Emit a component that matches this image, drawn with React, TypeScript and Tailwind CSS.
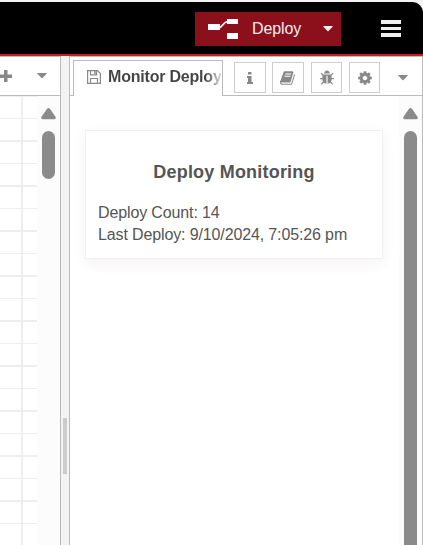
import type { ReactNode } from 'react';

const BOOK =
  'M1639 478q40 57 18 129l-275 906q-19 64-76.5 107.5t-122.5 43.5h-923q-77 0-148.5-53.5t-99.5-131.5q-24-67-2-127 0-4 3-27t4-37q1-8-3-21.5t-3-19.5q2-11 8-21t16.5-23.5 16.5-23.5q23-38 45-91.5t30-91.5q3-10 .5-30t-.5-28q3-11 17-28t17-23q21-36 42-92t25-90q1-9-2.5-32t.5-28q4-13 22-30.5t22-22.5q19-26 42.5-84.5t27.5-96.5q1-8-3-25.5t-2-26.5q2-8 9-18t18-23 17-21q8-12 16.5-30.5t15-35 16-36 19.5-32 26.5-23.5 36-11.5 47.5 5.5l-1 3q38-9 51-9h761q74 0 114 56t18 130l-274 906q-36 119-71.5 153.5t-128.5 34.5h-869q-27 0-38 15-11 16-1 43 24 70 144 70h923q29 0 56-15.5t35-41.5l300-987q7-22 5-57 38 15 59 43zm-1064 2q-4 13 2 22.5t20 9.5h608q13 0 25.5-9.5t16.5-22.5l21-64q4-13-2-22.5t-20-9.5h-608q-13 0-25.5 9.5t-16.5 22.5zm-83 256q-4 13 2 22.5t20 9.5h608q13 0 25.5-9.5t16.5-22.5l21-64q4-13-2-22.5t-20-9.5h-608q-13 0-25.5 9.5t-16.5 22.5z';
const BUG =
  'M1696 960q0 26-19 45t-45 19h-224q0 171-67 290l208 209q19 19 19 45t-19 45q-18 19-45 19t-45-19l-198-197q-5 5-15 13t-42 28.5-65 36.5-82 29-97 13v-896h-128v896q-51 0-101.5-13.5t-87-33-66-39-43.5-32.5l-15-14-183 207q-20 21-48 21-24 0-43-16-19-18-20.5-44.5t15.5-46.5l202-227q-58-114-58-274h-224q-26 0-45-19t-19-45 19-45 45-19h224v-294l-173-173q-19-19-19-45t19-45 45-19 45 19l173 173h844l173-173q19-19 45-19t45 19 19 45-19 45l-173 173v294h224q26 0 45 19t19 45zm-480-576h-640q0-133 93.5-226.5t226.5-93.5 226.5 93.5 93.5 226.5z';
const COG =
  'M1152 896q0-106-75-181t-181-75-181 75-75 181 75 181 181 75 181-75 75-181zm512-109v222q0 12-8 23t-20 13l-185 28q-19 54-39 91 35 50 107 138 10 12 10 25t-9 23q-27 37-99 108t-94 71q-12 0-26-9l-138-108q-44 23-91 38-16 136-29 186-7 28-36 28h-222q-14 0-24.5-8.5t-11.5-21.5l-28-184q-49-16-90-37l-141 107q-10 9-25 9-14 0-25-11-126-114-165-168-7-10-7-23 0-12 8-23 15-21 51-66.5t54-70.5q-27-50-41-99l-183-27q-13-2-21-12.5t-8-23.5v-222q0-12 8-23t19-13l186-28q14-46 39-92-40-57-107-138-10-12-10-24 0-10 9-23 26-36 98.5-107.5t94.5-71.5q13 0 26 10l138 107q44-23 91-38 16-136 29-186 7-28 36-28h222q14 0 24.5 8.5t11.5 21.5l28 184q49 16 90 37l142-107q9-9 24-9 13 0 25 10 129 119 165 170 7 8 7 22 0 12-8 23-15 21-51 66.5t-54 70.5q26 50 41 98l183 28q13 2 21 12.5t8 23.5z';

function Caret() {
  return (
    <svg width="10" height="6" viewBox="0 0 10 6" fill="currentColor">
      <path d="M0.6 0h8.8q.6.3.2.8L5.5 5.1q-.5.4-1 0L.4.8Q0 .3.6 0z" />
    </svg>
  );
}

function ScrollArrow() {
  return (
    <svg width="15" height="12" viewBox="0 0 15 12" fill="#8b8b8b">
      <path d="M5.9 1Q7.5-.8 9.1 1l5.2 7.5Q15.7 11 13 11.3H2Q-.7 11 .7 8.5z" />
    </svg>
  );
}

function SidebarButton({ label, className, children }: { label: string; className: string; children: ReactNode }) {
  return (
    <button
      aria-label={label}
      className={`flex h-[31px] shrink-0 items-center justify-center border border-[#ccc] bg-white text-[#888] ${className}`}
    >
      {children}
    </button>
  );
}

function Glyph({ d }: { d: string }) {
  return (
    <svg width="16" height="16" viewBox="0 0 1792 1792" fill="currentColor">
      <path d={d} />
    </svg>
  );
}

function Header() {
  return (
    <header className="flex h-[54px] items-start rounded-tr-[11px] border-b-2 border-[#c02020] bg-black pt-2.5 pl-[195px]">
      <div className="flex h-[34px] w-[146px] shrink-0 items-center bg-[#8c101c] pl-[13px] text-[#eee]">
        <svg width="30" height="20" viewBox="0 0 30 20" fill="#fff">
          <path d="M0 5h12v6H0zM19 0h11v5H19zM19 14h11v6H19z" />
          <path d="M11 8.5c4 0 4-6 9-6" fill="none" stroke="#fff" strokeWidth="1.5" />
        </svg>
        <span className="ml-[14px] w-[49px] text-base tracking-[-0.1px]">Deploy</span>
        <span className="ml-[22px]">
          <Caret />
        </span>
      </div>
      <svg className="mt-2 ml-10" width="20" height="17" viewBox="0 0 20 17" fill="#eee">
        <path d="M0 0h20v4H0zM0 7h20v3H0zM0 13h20v4H0z" />
      </svg>
    </header>
  );
}

function Workspace() {
  return (
    <section className="flex w-[61px] shrink-0 flex-col border-t border-r border-[#bbb]">
      <div className="flex h-[39px] shrink-0 items-center border-b border-[#bbb] text-[#888]">
        <svg width="12" height="12" viewBox="0 0 12 12" fill="currentColor">
          <path d="M0 4.5h4V0h3.5v4.5H12V8H7.500v4H4V8H0z" />
        </svg>
        <span className="ml-[25px]">
          <Caret />
        </span>
      </div>
      <div className="flex grow">
        <svg width="37" height="449" fill="#eee">
          <defs>
            <pattern id="grid" width="45" height="45" patternUnits="userSpaceOnUse">
              <path d="M0 22h45v1H0zM0 44h45v1H0zM0 0h45v1H0z" />
            </pattern>
          </defs>
          <rect width="37" height="449" fill="url(#grid)" />
          <path d="M21 0h2v449h-2z" />
        </svg>
        <div className="flex w-[23px] flex-col items-center bg-[#fcfcfc] pt-3">
          <ScrollArrow />
          <div className="mt-[11px] h-12 w-[13px] rounded-full bg-[#8b8b8b]" />
        </div>
      </div>
    </section>
  );
}

function Sidebar() {
  return (
    <section className="flex grow flex-col border-x border-t border-[#bbb]">
      <div className="flex h-[39px] shrink-0 items-start">
        <div className="h-full w-[3px] border-b border-[#bbb]" />
        <div className="mt-[3px] flex h-9 w-[150px] shrink-0 items-center border border-b-0 border-[#bbb] pl-[13px]">
          <svg className="mt-[-4px] shrink-0" width="14" height="14" viewBox="0 0 14 14" fill="none" stroke="#888">
            <path d="M.6.6h9.900l2.900 2.900v9.900H.6zM3.500.6v4.300h6V.6M3.500 13.400V8.500h7v4.900" strokeWidth="1.200" />
            <path d="M7.200 1h1.400v3H7.200z" fill="#888" stroke="none" />
          </svg>
          <div className="mt-[-4px] ml-[7px] w-[113px] shrink-0 bg-gradient-to-r from-[#444] from-86% to-[#ddd] bg-clip-text text-base font-bold tracking-[-0.2px] whitespace-nowrap text-transparent">
            Monitor Deploy
          </div>
        </div>
        <div className="flex h-full grow items-start border-b border-[#bbb] pt-[5px] pl-[11px]">
          <SidebarButton label="Information" className="w-8">
            <svg width="6" height="12" viewBox="0 0 6 12" fill="currentColor">
              <path d="M1 0h3.500v2.500H1zM0 4h4.500v6H6v2H0v-2h1V6H0z" />
            </svg>
          </SidebarButton>
          <SidebarButton label="Help" className="ml-1.5 w-8">
            <Glyph d={BOOK} />
          </SidebarButton>
          <SidebarButton label="Debug" className="ml-[7px] w-[31px]">
            <Glyph d={BUG} />
          </SidebarButton>
          <SidebarButton label="Configuration" className="ml-[7px] w-[31px]">
            <Glyph d={COG} />
          </SidebarButton>
          <span className="mt-[13px] ml-[18px] text-[#888]">
            <Caret />
          </span>
        </div>
      </div>
      <div className="flex grow">
        <div className="grow pt-[34px] pl-[15px]">
          <article className="h-[129px] w-[298px] border border-[#f0f0f0] px-3 pt-[30px] text-base leading-[22px] text-[#555] shadow-[0_4px_14px_rgba(70,20,0,0.055)]">
            <h1 className="text-center text-lg leading-[22px] font-bold tracking-[0.2px]">Deploy Monitoring</h1>
            <p className="mt-[19px] tracking-[-0.13px]">Deploy Count: 14</p>
            <p className="tracking-[-0.13px]">Last Deploy: 9/10/2024, 7:05:26 pm</p>
          </article>
        </div>
        <div className="flex w-[23px] shrink-0 flex-col items-center bg-[#fcfcfc] pt-3">
          <ScrollArrow />
          <div className="mt-[11px] w-[13px] grow rounded-t-full bg-[#8b8b8b]" />
        </div>
      </div>
    </section>
  );
}

export default function App() {
  return (
    <div className="flex h-[545px] w-[423px] flex-col overflow-hidden bg-[#f3f4f6] pt-0.5 font-['Liberation_Sans',Arial,sans-serif]">
      <Header />
      <main className="flex min-h-0 grow bg-white">
        <Workspace />
        <div className="flex w-2 shrink-0 justify-center bg-[#f3f3f3] pt-[362px]">
          <div className="h-14 w-1 bg-[#ccc]" />
        </div>
        <Sidebar />
      </main>
    </div>
  );
}
